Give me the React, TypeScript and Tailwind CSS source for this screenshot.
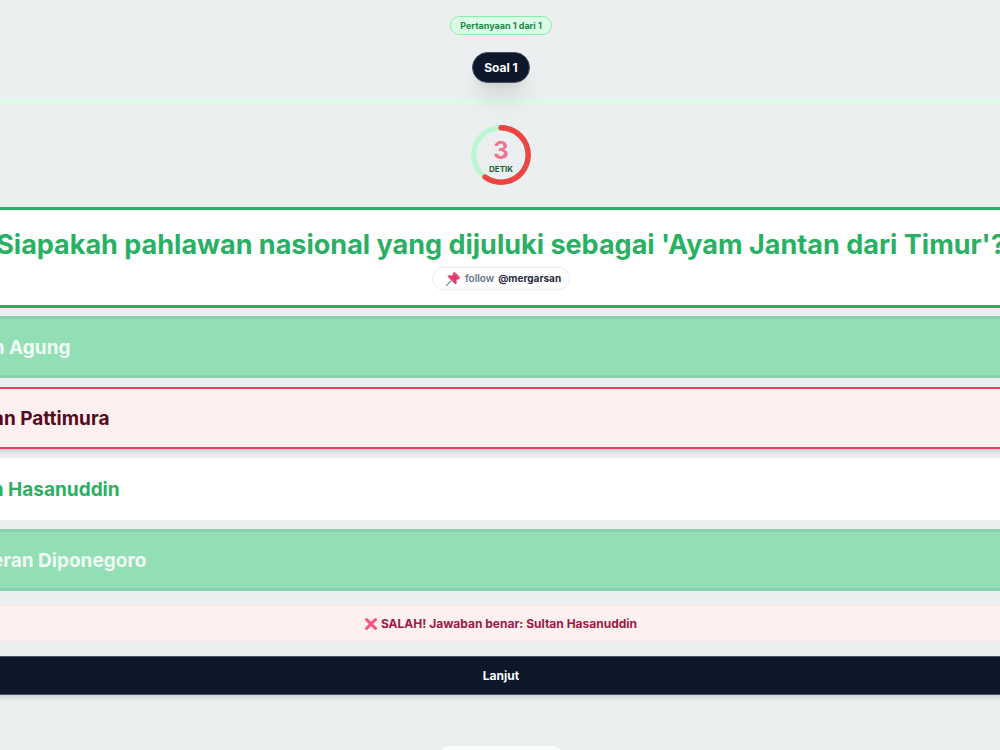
const options = [
  { text: "Sultan Agung", state: "idle" },
  { text: "Kapitan Pattimura", state: "wrong" },
  { text: "Sultan Hasanuddin", state: "correct" },
  { text: "Pangeran Diponegoro", state: "idle" },
];

const optionStyles: Record<string, string> = {
  idle: "border-3 border-[#8ccfaa] bg-[#93dfb5] text-[#effaf4]",
  wrong: "border-2 border-[#e8405f] bg-[#fff0f0] text-[#560a22] shadow-md",
  correct: "border-2 border-white bg-white text-[#29b062]",
};

function Timer() {
  return (
    <div className="relative size-15">
      <svg viewBox="0 0 60 60" className="size-full" fill="none" strokeWidth="5.4">
        <circle cx="30" cy="30" r="27.2" stroke="#bbf7d0" />
        <circle
          cx="30"
          cy="30"
          r="27.2"
          stroke="#ef4444"
          strokeLinecap="round"
          pathLength="100"
          strokeDasharray="60 100"
          transform="rotate(-90 30 30)"
        />
      </svg>
      <div className="absolute inset-0 flex flex-col items-center justify-center pt-1">
        <span className="text-2xl leading-6 font-bold text-[#ee7591]">3</span>
        <span className="text-[8px] leading-3 font-bold text-[#166534]">DETIK</span>
      </div>
    </div>
  );
}

function Pushpin() {
  return (
    <svg viewBox="0 0 16 16" className="size-4" aria-hidden="true">
      <path d="M5.800 10 1.600 14.400" stroke="#9298a3" strokeWidth="1.400" strokeLinecap="round" />
      <path
        d="M8 1.800c.700-.900 1.900-.800 2.700 0l3.600 3.600c.800.800.900 2 .1 2.600-.600.500-1.300.500-2 .200l-1 1.100c.700 1.700.500 3.200-.800 4.200L2.400 5.400c1.200-1.200 2.700-1.400 4.300-.700l1.300-1c-.400-.700-.400-1.400 0-1.900Z"
        fill="#e5406b"
      />
      <path d="m8.300 4.200 3.600 3.600-1.200 1.200-3.700-3.700Z" fill="#d23763" />
      <path d="m9.700 2.500 3.900 3.900" stroke="#f0587f" strokeWidth="1.200" strokeLinecap="round" />
    </svg>
  );
}

export default function App() {
  return (
    <main className="min-h-screen overflow-hidden bg-[#ebeff0] font-['Inter',sans-serif]">
      <header className="flex flex-col items-center border-b-4 border-[#dcfce7] pt-4 pb-4 pl-0.5">
        <span className="rounded-full border border-[#86efac] bg-[#dcfce7] px-[9px] text-[9px] leading-[17px] font-bold text-[#20894a]">
          Pertanyaan 1 dari 1
        </span>
        <h1 className="mt-[17px] rounded-full border border-[#475063] bg-[#0f172a] px-[11px] text-xs leading-[29px] font-bold text-white shadow-xl">
          Soal 1
        </h1>
      </header>

      <div className="flex justify-center pt-[22px] pb-[22px] pl-0.5">
        <Timer />
      </div>

      <div className="-mr-[82px] -ml-20 flex flex-col">
        <section className="flex flex-col items-center border-3 border-[#29b062] bg-white pt-[15px] pb-[15px]">
          <h2 className="text-[27px] leading-10 font-bold whitespace-nowrap text-[#29b062]">
            Siapakah pahlawan nasional yang dijuluki sebagai 'Ayam Jantan dari Timur'?
          </h2>
          <a
            href="#mergarsan"
            className="mt-0.5 flex items-center rounded-full border border-[#e8ecf3] bg-white pr-2 pl-3 text-[10px] leading-[21px]"
          >
            <Pushpin />
            <span className="ml-1 font-semibold text-[#64748b]">follow</span>
            <span className="ml-1 font-bold text-[#1e293b]">@mergarsan</span>
          </a>
        </section>

        <div className="mt-2 flex flex-col gap-[9px]">
          {options.map((option) => (
            <button
              key={option.text}
              type="button"
              className={`flex h-[62px] items-center px-[22px] pt-0.5 text-left text-[19px] leading-7 font-bold ${optionStyles[option.state]}`}
            >
              {option.text}
            </button>
          ))}
        </div>

        <p
          role="status"
          className="mt-[14px] flex items-center justify-center gap-1 border border-[#ffe0e3] bg-[#fff0f0] pt-[9px] pb-[7px] text-xs leading-[18px] font-bold text-[#a31643]"
        >
          <svg viewBox="0 0 12 12" className="size-3" aria-hidden="true">
            <path d="m1.600 1.600 8.800 8.800M10.400 1.600l-8.800 8.800" stroke="#fa5580" strokeWidth="3" strokeLinecap="round" />
          </svg>
          SALAH! Jawaban benar: Sultan Hasanuddin
        </p>

        <button
          type="button"
          className="mt-[15px] border border-[#4b5565] bg-[#0f172a] pt-[9px] pb-2 text-xs leading-5 font-bold text-white shadow-md"
        >
          Lanjut
        </button>
      </div>

      <div className="flex justify-center pt-[51px] pl-0.5">
        <div className="h-8 w-[122px] rounded-lg bg-[#f8fafb] shadow-lg" />
      </div>
    </main>
  );
}
